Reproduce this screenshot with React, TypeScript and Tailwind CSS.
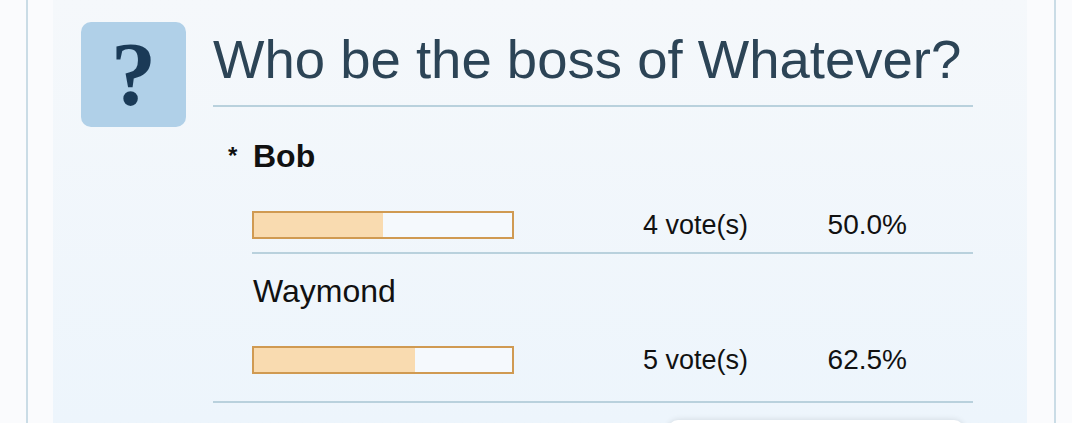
const options = [
  { name: "Bob", voted: true, votes: 4, pct: 50.0 },
  { name: "Waymond", voted: false, votes: 5, pct: 62.5 },
]

function PollOption({ name, voted, votes, pct, last }: { name: string; voted: boolean; votes: number; pct: number; last: boolean }) {
  return (
    <div>
      <div className={`flex items-center text-[32px] leading-[32px] text-[#111] ${voted ? "mt-[33px] font-bold" : "mt-[21px]"}`}>
        <span className="w-[40px] pl-[15px] text-[24px] font-bold">{voted ? "*" : ""}</span>
        <span>{name}</span>
      </div>
      <div className={`flex items-center border-b-2 border-[#b9d1dd] ${last ? "mt-[39px] pb-[27px] pl-[39px]" : "ml-[39px] mt-[39px] pb-[13px]"}`}>
        <div className="h-[28px] w-[262px] border-2 border-[#d09a52] bg-[#f5f9fd]">
          <div className="h-full bg-[#f9dbb0]" style={{ width: `${pct}%` }} />
        </div>
        <div className="ml-[129px] w-[180px] text-[27px] leading-[28px] text-[#111]">{votes} vote(s)</div>
        <div className="w-[84px] text-right text-[28px] leading-[28px] text-[#111]">{pct.toFixed(1)}%</div>
      </div>
    </div>
  )
}

export default function App() {
  return (
    <div className="h-[423px] overflow-hidden bg-[#fafbfd]" style={{ fontFamily: '"Liberation Sans", Arial, sans-serif' }}>
      <div className="ml-[26px] mr-[16px] h-full border-x-2 border-[#cadce6] pl-[25px] pr-[27px]">
        <div className="flex h-full gap-[27px] bg-gradient-to-b from-[#f5f8fb] to-[#edf5fc] pl-[28px] pr-[54px] pt-[22px]">
          {/* 问号图标 */}
          <div className="flex h-[105px] w-[105px] shrink-0 items-center justify-center rounded-[10px] bg-[#b0d0e8]">
            <span className="text-[90px] font-bold leading-none text-[#1a3a57]" style={{ fontFamily: '"Liberation Serif", serif' }}>?</span>
          </div>

          <div className="flex-1">
            <h2 className="border-b-2 border-[#b9d1dd] pb-[18px] pt-[11px] text-[54.5px] leading-[54px] text-[#2c4456]">
              Who be the boss of Whatever?
            </h2>
            {options.map((o, i) => (
              <PollOption key={o.name} {...o} last={i === options.length - 1} />
            ))}
            <div className="ml-[455px] mt-[17px] h-[40px] w-[296px] rounded-[10px] bg-white shadow-[0_0_6px_rgba(0,0,0,0.12)]" />
          </div>
        </div>
      </div>
    </div>
  )
}
